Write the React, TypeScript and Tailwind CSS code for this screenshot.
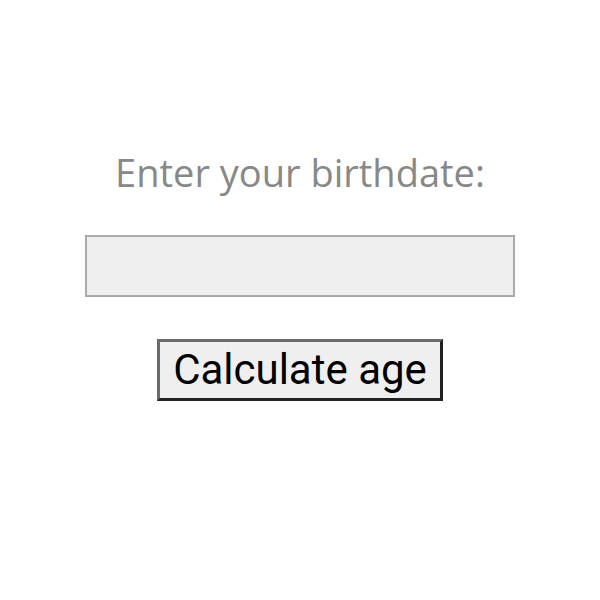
import React, { useState } from "react";

const App = () => {
  const [birthdate, setBirthdate] = useState("");

  return (
    <div className="w-[600px] h-[600px] bg-white flex flex-col items-center pt-[146px]">
      <h1 className="text-[38px] leading-[52px] text-[#888888] font-['Open_Sans',sans-serif]">
        Enter your birthdate:
      </h1>
      <input
        className="mt-[37px] w-[430px] h-[62px] bg-[#efefef] border-2 border-[#aaaaaa] outline-none"
        value={birthdate}
        onChange={(event) => setBirthdate(event.target.value)}
      />
      <button className="mt-[42px] w-[286px] h-[62px] bg-[#efefef] border-[3px] border-t-[#6b6b6b] border-l-[#6b6b6b] border-b-[#222222] border-r-[#222222] text-[42px] text-black font-['Roboto',sans-serif] leading-none">
        Calculate age
      </button>
    </div>
  );
};

export default App;
